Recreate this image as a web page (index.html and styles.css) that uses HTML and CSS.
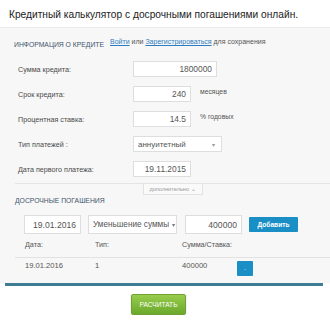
FILE: index.html
```html
<!DOCTYPE html>
<html lang="ru">
<head>
    <meta charset="UTF-8">
    <meta name="viewport" content="width=device-width, initial-scale=1.0">
    <title>Кредитный калькулятор</title>
    <link rel="stylesheet" href="styles.css">
</head>
<body>
    <div class="title">Кредитный калькулятор с досрочными погашениями онлайн.</div>

    <div class="panel">
        <div class="panel-head">
            <span class="caption">Информация о кредите</span>
            <span class="auth"><a href="#">Войти</a> или <a href="#">Зарегистрироваться</a> для сохранения</span>
        </div>

        <div class="form">
            <div class="row">
                <label>Сумма кредита:</label>
                <input class="field wide" type="text" value="1800000">
            </div>
            <div class="row">
                <label>Срок кредита:</label>
                <input class="field short" type="text" value="240">
                <span class="unit">месяцев</span>
            </div>
            <div class="row">
                <label>Процентная ставка:</label>
                <input class="field short" type="text" value="14.5">
                <span class="unit">% годовых</span>
            </div>
            <div class="row">
                <label>Тип платежей :</label>
                <div class="select type-select"><span>аннуитетный</span><span class="arrow">▾</span></div>
            </div>
            <div class="row last">
                <label>Дата первого платежа:</label>
                <input class="field short" type="text" value="19.11.2015">
            </div>
        </div>

        <div class="more"><span class="more-tab">дополнительно ⌄</span></div>

        <div class="caption early">Досрочные погашения</div>

        <div class="add-row">
            <input class="field big date" type="text" value="19.01.2016">
            <div class="select big mode"><span class="mode-text">Уменьшение суммы</span><span class="arrow">▾</span></div>
            <input class="field big amount" type="text" value="400000">
            <button class="btn-add">Добавить</button>
        </div>

        <div class="table">
            <div class="trow thead">
                <span class="c-date">Дата:</span>
                <span class="c-type">Тип:</span>
                <span class="c-sum">Сумма/Ставка:</span>
            </div>
            <div class="trow tbody">
                <span class="c-date">19.01.2016</span>
                <span class="c-type">1</span>
                <span class="c-sum">400000</span>
                <button class="btn-del">-</button>
            </div>
        </div>
    </div>

    <div class="rule"></div>

    <div class="actions">
        <button class="btn-calc">Расчитать</button>
    </div>
</body>
</html>
```

FILE: styles.css
```css
body {
    margin: 0;
    width: 330px;
    font-family: "Liberation Sans", Arial, sans-serif;
    background: #fff;
    color: #444;
    white-space: nowrap;
}

.title {
    height: 19px;
    padding: 8px 0 0 9px;
    font-size: 10.2px;
    line-height: 14px;
    color: #222;
    border-bottom: 1px solid #ececec;
}

.panel {
    background: #f7f7f7;
    padding-top: 9px;
}

.panel-head {
    display: flex;
    align-items: flex-start;
    height: 14px;
}

.caption {
    font-size: 6.8px;
    line-height: 14px;
    text-transform: uppercase;
    color: #3e546c;
    padding-left: 14px;
}

.panel-head .caption {
    width: 96px;
    margin-top: 1px;
}

.auth {
    font-size: 7px;
    line-height: 10px;
    color: #555;
}

.auth a {
    color: #2b7cc1;
}

.form {
    margin-top: 10px;
    padding-left: 18px;
}

.row {
    display: flex;
    align-items: center;
    height: 16px;
    margin-bottom: 9px;
}

.row.last {
    margin-bottom: 0;
}

.row label {
    width: 115px;
    font-size: 7.2px;
    color: #4a4a4a;
}

.field {
    box-sizing: border-box;
    height: 16px;
    border: 1px solid #dedede;
    background: #fff;
    font-family: inherit;
    font-size: 8.4px;
    color: #555;
    text-align: right;
    padding: 0 4px;
    outline: none;
}

.wide {
    width: 84px;
}

.short {
    width: 58px;
}

.unit {
    margin-left: 9px;
    font-size: 6.8px;
    color: #555;
    margin-top: -5px;
}

.select {
    box-sizing: border-box;
    display: flex;
    align-items: center;
    justify-content: space-between;
    height: 16px;
    border: 1px solid #dedede;
    background: #fff;
    font-size: 8px;
    color: #555;
    padding: 0 4px;
    overflow: hidden;
}

.select .arrow {
    font-size: 6px;
    color: #999;
}

.type-select {
    width: 89px;
    padding-right: 6px;
}

.more {
    margin: 6px 0 0 15px;
    border-top: 1px solid #e4e4e4;
    display: flex;
    justify-content: center;
    height: 11px;
}

.more-tab {
    width: 60px;
    box-sizing: border-box;
    border: 1px solid #e2e2e2;
    border-top: none;
    background: #fafafa;
    font-size: 5.6px;
    line-height: 10px;
    color: #999;
    text-align: center;
}

.early {
    line-height: 12px;
    padding-left: 15px;
}

.add-row {
    display: flex;
    align-items: center;
    margin-top: 8px;
    padding-left: 24px;
    height: 19px;
}

.big {
    height: 19px;
    font-size: 8.6px;
}

.date {
    width: 57px;
}

.mode {
    width: 89px;
    margin-left: 7px;
    padding: 0 1px 0 4px;
    font-size: 8.2px;
}

.mode-text {
    overflow: hidden;
}

.mode .arrow {
    color: #777;
}

.amount {
    width: 57px;
    margin-left: 8px;
}

.btn-add {
    margin-left: 7px;
    width: 49px;
    height: 15px;
    border: none;
    border-radius: 1px;
    background: #1a8fc6;
    color: #fff;
    font-family: inherit;
    font-weight: bold;
    font-size: 6.6px;
    padding: 0;
}

.table {
    margin: 4px 0 0 15px;
}

.trow {
    display: flex;
    padding-left: 10px;
    font-size: 7.2px;
    color: #555;
}

.thead {
    line-height: 14px;
    padding-bottom: 5px;
    border-bottom: 1px solid #e2e2e2;
}

.tbody {
    padding-top: 2px;
    padding-bottom: 7px;
    line-height: 12px;
    font-size: 7.6px;
}

.c-date {
    width: 70px;
}

.c-type {
    width: 87px;
}

.c-sum {
    width: 55px;
}

.btn-del {
    margin-top: 1px;
    width: 16px;
    height: 15px;
    border: none;
    border-radius: 1px;
    background: #1a8fc6;
    color: #cde8f5;
    font-size: 6px;
    line-height: 10px;
    padding: 0;
}

.rule {
    height: 3px;
    margin: 0 7px 0 5px;
    background: #3f7d95;
}

.actions {
    padding: 7px 0 0 131px;
}

.btn-calc {
    width: 55px;
    height: 21px;
    border: 1px solid #6fa232;
    border-radius: 2px;
    background: linear-gradient(#98cc4c, #6aa82b);
    box-shadow: 0 1px 2px rgba(0, 0, 0, 0.2);
    color: #fff;
    font-family: inherit;
    font-size: 6.6px;
    text-transform: uppercase;
    padding: 0;
}
```
